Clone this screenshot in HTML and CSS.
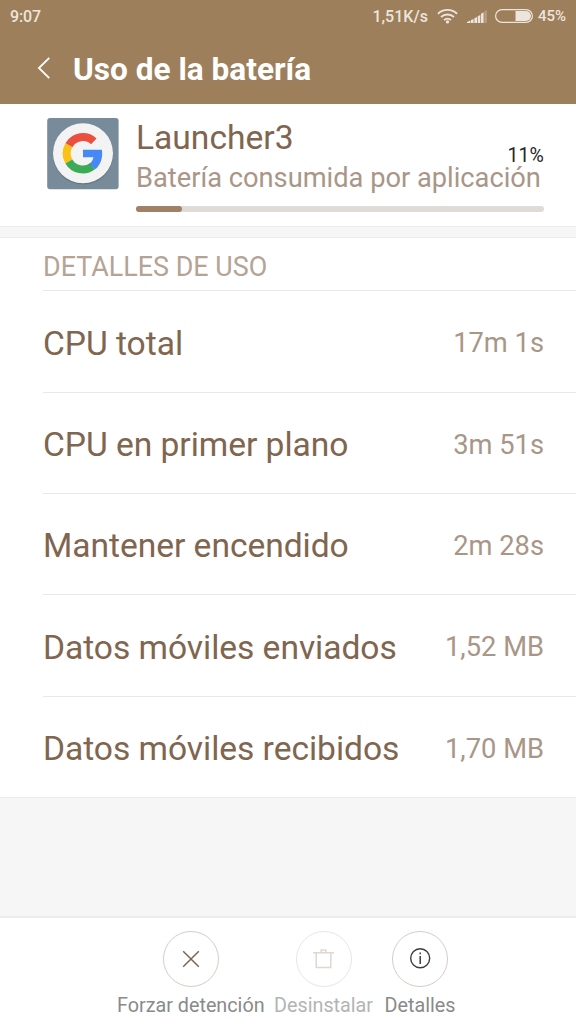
FILE: index.html
```html
<!DOCTYPE html>
<html lang="es">
<head>
<meta charset="utf-8">
<title>Uso de la batería</title>
<link rel="stylesheet" href="styles.css">
</head>
<body>
<div class="screen">
  <header class="header">
    <div class="status">
      <span class="clock">9:07</span>
      <span class="speed">1,51K/s</span>
      <svg class="wifi" width="21" height="16" viewBox="0 0 22 16" fill="none" stroke="#ede5dd" stroke-width="2">
        <path d="M1 5.6a14.4 14.4 0 0 1 20 0M4.2 9.1a9.8 9.8 0 0 1 13.6 0M7.4 12.3a5.2 5.2 0 0 1 7.2 0"/>
        <circle cx="11" cy="14.2" r="1.7" fill="#ede5dd" stroke="none"/>
      </svg>
      <svg class="signal" width="20" height="14" viewBox="0 0 20 14" fill="#ede5dd">
        <path d="M0 13V12L3.4 10.5V13zM4 13V10L6.6 9V13zM7.4 13V8.2L10 7V13zM10.7 13V6.2L13.3 5V13zM14 13V3.8L16.6 2.3V13z"/>
        <path d="M17.3 13V1.6L19.8 0V13z" opacity=".3"/>
      </svg>
      <svg class="battery" width="38" height="14" viewBox="0 0 38 14">
        <rect x=".6" y=".6" width="36.8" height="12.8" rx="6.4" fill="none" stroke="#ede5dd" stroke-width="1.2"/>
        <path d="M20.5 2H31a5 5 0 0 1 0 10H20.5z" fill="#ede5dd"/>
      </svg>
      <span class="level">45%</span>
    </div>
    <div class="titlebar">
      <svg class="back" width="14" height="24" viewBox="0 0 14 24" fill="none" stroke="#fff" stroke-width="1.8"><path d="M12.3 1.8 1.9 12 12.3 22.2"/></svg>
      <h1 class="title">Uso de la batería</h1>
    </div>
  </header>

  <section class="summary">
    <svg class="app-icon" width="72" height="72" viewBox="0 0 72 72">
      <rect x=".2" y="0" width="71.4" height="71.2" rx="3" fill="#778b9a"/>
      <circle cx="36" cy="36.3" r="30.2" fill="#566773" opacity=".6"/>
      <circle cx="36" cy="35.3" r="30" fill="#f3f3f3"/>
      <g fill="none" stroke-width="8">
        <path d="M21.9 27.2A16 16 0 0 1 46.8 23.4" stroke="#ea4f40"/>
        <path d="M21.9 43.4A16 16 0 0 1 21.9 27.2" stroke="#fbc116"/>
        <path d="M45.6 48.1A16 16 0 0 1 21.9 43.4" stroke="#3caa57"/>
      </g>
      <path d="M36 31.7H54.9C56 39 54 46.5 48.2 51.3L42.4 45.8C44.6 44.2 45.9 42 46.5 39.3H36z" fill="#4688f4"/>
    </svg>
    <div class="summary-body">
      <div class="summary-text">
        <div class="app-name">Launcher3</div>
        <div class="app-desc">Batería consumida por aplicación</div>
        <div class="percent">11%</div>
      </div>
      <div class="bar"><div class="bar-fill" style="width:11.2%"></div></div>
    </div>
  </section>

  <section class="details">
    <h2 class="section-title">DETALLES DE USO</h2>
    <div class="row"><span class="label">CPU total</span><span class="value">17m 1s</span></div>
    <div class="row"><span class="label">CPU en primer plano</span><span class="value">3m 51s</span></div>
    <div class="row"><span class="label">Mantener encendido</span><span class="value">2m 28s</span></div>
    <div class="row"><span class="label">Datos móviles enviados</span><span class="value">1,52 MB</span></div>
    <div class="row"><span class="label">Datos móviles recibidos</span><span class="value">1,70 MB</span></div>
  </section>

  <footer class="actions">
    <div class="action">
      <svg width="56" height="56" viewBox="0 0 56 56" fill="none">
        <circle cx="28" cy="28" r="27.5" stroke="#d6cbc4"/>
        <path d="M20.2 20.2 35.8 35.8M35.8 20.2 20.2 35.8" stroke="#80624e" stroke-width="1.5"/>
      </svg>
      <span>Forzar detención</span>
    </div>
    <div class="action disabled">
      <svg width="56" height="56" viewBox="0 0 56 56" fill="none">
        <circle cx="28" cy="28" r="27.5" stroke="#e9e5e2"/>
        <path d="M17 21.8H38M20.2 22V36.5H34.8V22M25.2 21.5V18.9H29.8V21.5" stroke="#e0d7d0" stroke-width="1.5"/>
      </svg>
      <span>Desinstalar</span>
    </div>
    <div class="action info">
      <svg width="56" height="56" viewBox="0 0 56 56" fill="none">
        <circle cx="28" cy="28" r="27.5" stroke="#d6cbc4"/>
        <circle cx="28.2" cy="27.3" r="9.5" stroke="#3c3c3c" stroke-width="1.4"/>
        <path d="M28.2 25V33M28.2 21.6V23.2" stroke="#3c3c3c" stroke-width="1.5"/>
      </svg>
      <span>Detalles</span>
    </div>
  </footer>
</div>
</body>
</html>
```

FILE: styles.css
```css
* { box-sizing: border-box; }
body { margin: 0; font-family: Roboto, "Liberation Sans", sans-serif; }
.screen {
  width: 576px;
  height: 1024px;
  display: flex;
  flex-direction: column;
  background: #f6f6f6;
  overflow: hidden;
}
.header { height: 104px; background: #9d7f5b; }
.status {
  height: 32px;
  padding: 0 10px;
  display: flex;
  align-items: center;
  color: #ede5dd;
  font-size: 16px;
  font-weight: 500;
  white-space: nowrap;
}
.clock { letter-spacing: -0.1px; }
.speed { margin-left: auto; }
.wifi { margin-left: 9px; }
.signal { margin: 1px 0 0 9px; }
.battery { margin-left: 8px; }
.level { margin-left: 5px; font-size: 15px; }
.titlebar { height: 72px; padding: 0 37px; display: flex; align-items: center; }
.title {
  margin: 4px 0 0 22px;
  font-size: 31.6px;
  line-height: 38px;
  font-weight: 700;
  color: #fff;
}
.summary {
  height: 122px;
  padding: 14px 32px 0 47px;
  display: flex;
  gap: 17px;
  background: #fff;
}
.app-icon { flex: none; }
.summary-body { flex: 1; white-space: nowrap; }
.summary-text { position: relative; height: 80px; }
.app-name { font-size: 33.6px; line-height: 40px; color: #80654f; }
.app-desc { margin-top: 8px; font-size: 27.25px; line-height: 24px; color: #a99687; }
.percent {
  position: absolute;
  right: 0;
  top: 30px;
  font-size: 19.5px;
  line-height: 16px;
  letter-spacing: 0.1px;
  color: #262626;
}
.bar { height: 6px; margin-top: 8px; border-radius: 3px; background: #dfdbd7; }
.bar-fill { height: 6px; border-radius: 3px; background: #a18068; }
.details {
  height: 572px;
  margin-bottom: auto;
  border-top: 1px solid #ececec;
  border-bottom: 1px solid #ececec;
  padding-left: 43px;
  background: linear-gradient(#f6f6f6 0 10px, #ececec 10px 11px, #fff 11px);
}
.section-title {
  height: 63.4px;
  margin: 0;
  padding: 11px 0 0;
  font-size: 26.9px;
  line-height: 58px;
  font-weight: 400;
  color: #b5a396;
}
.row {
  height: 101.33px;
  padding: 3.5px 32px 0 0;
  border-top: 1px solid #e9e9e9;
  display: flex;
  align-items: center;
  justify-content: space-between;
  white-space: nowrap;
}
.label { font-size: 33.6px; letter-spacing: -0.04px; color: #80654f; }
.value { font-size: 27.3px; color: #a99687; }
.actions {
  height: 108px;
  padding: 13px 0 0 117px;
  border-top: 2px solid #ececec;
  background: #fff;
  display: flex;
  gap: 9.5px;
}
.action {
  display: flex;
  flex-direction: column;
  align-items: center;
  color: #8a8a8a;
  font-size: 19.75px;
  line-height: 24px;
  white-space: nowrap;
}
.action span { margin-top: 7px; }
.action.disabled { color: #b4b4b4; }
.action.info { margin-left: 2px; }
```
